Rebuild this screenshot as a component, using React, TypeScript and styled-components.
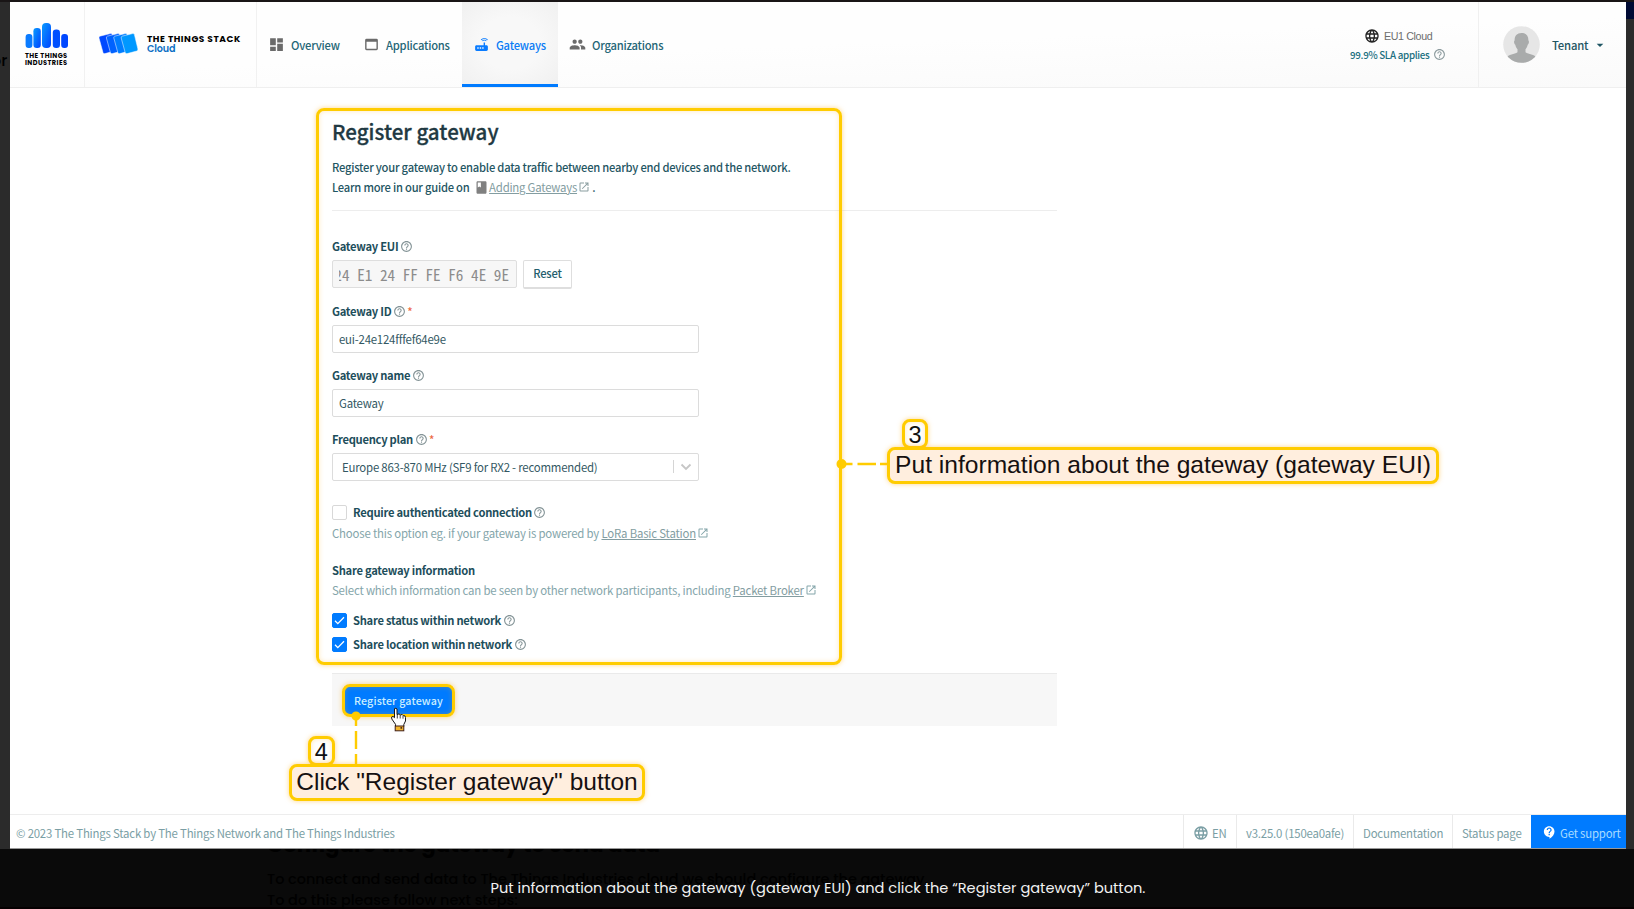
import React from 'react';
import styled, { createGlobalStyle } from 'styled-components';
import {
  MdArrowDropDown,
  MdBook,
  MdContactSupport,
  MdDashboard,
  MdGroup,
  MdHelpOutline,
  MdLanguage,
  MdOpenInNew,
  MdRouter,
  MdWebAsset,
} from 'react-icons/md';

const sans = '"Noto Sans CJK SC", "Noto Sans", sans-serif';
const geometric = 'Poppins, Inter, sans-serif';
const yellow = '#ffcc00';

const GlobalStyle = createGlobalStyle`
  * { box-sizing: border-box; }
  body { margin: 0; background: #2a2a2a; overflow: hidden; }
  svg { display: block; flex: none; }
`;

const Page = styled.div`
  position: relative;
  width: 1634px;
  height: 909px;
  padding-top: 2px;
  overflow: hidden;
  background: linear-gradient(#191516 2px, #2b2b2b 2px);
  display: flex;
  flex-direction: column;
`;

const Backdrop = styled.div`
  position: absolute;
  inset: 0;
  font-family: ${geometric};
  color: #000;
`;

const BackdropText = styled.div<{ $x: number; $y: number; $size: number; $weight?: number }>`
  position: absolute;
  left: ${(p) => p.$x}px;
  top: ${(p) => p.$y}px;
  font-size: ${(p) => p.$size}px;
  font-weight: ${(p) => p.$weight ?? 500};
  line-height: 22px;
  white-space: nowrap;
`;

const BackdropShade = styled.div`
  position: absolute;
  left: 0;
  right: 0;
  top: 849px;
  bottom: 0;
  background: #0a0a0a;
  border-bottom: 2px solid #050001;
`;

const BackdropBar = styled.div`
  position: absolute;
  right: 0;
  top: 2px;
  width: 8px;
  height: 17px;
  background: #000a33;
`;

const Shot = styled.div`
  position: relative;
  width: 1616px;
  height: 847px;
  margin-left: 10px;
  flex: none;
  background: #fff;
  border-bottom: 1px solid #989898;
  display: flex;
  flex-direction: column;
  font-family: ${sans};
  font-size: 11.4px;
  letter-spacing: -0.2px;
  color: #1f5663;
  white-space: nowrap;
`;

const Header = styled.header`
  height: 86px;
  flex: none;
  display: flex;
  border-bottom: 1px solid #efefef;
  background: linear-gradient(178deg, #fefefe 50%, #fafafa);
`;

const Industries = styled.div`
  width: 75px;
  padding: 21px 0 0 15px;
  border-right: 1px solid #f1f1f1;
  font: 700 6.6px/7.2px ${geometric};
  letter-spacing: 0.42px;
  color: #000;
`;

const IndustriesName = styled.div`
  margin-top: 2.5px;
`;

const StackBrand = styled.div`
  width: 172px;
  display: flex;
  padding: 31px 0 0 14px;
  gap: 8px;
  border-right: 1px solid #f1f1f1;
`;

const StackName = styled.div`
  font: 700 9px/10px ${geometric};
  letter-spacing: 0.55px;
  color: #000;
  padding-top: 1px;
`;

const StackEdition = styled.div`
  color: #0a6fc4;
  font-size: 9.6px;
  font-weight: 600;
  letter-spacing: -0.1px;
`;

const Nav = styled.nav`
  display: flex;
  flex: 1;
`;

const Tab = styled.a<{ $width: number; $active?: boolean }>`
  width: ${(p) => p.$width}px;
  height: 85px;
  display: flex;
  align-items: center;
  gap: 6px;
  padding: 0 0 0 11px;
  font-weight: 500;
  font-size: 11.2px;
  letter-spacing: -0.22px;
  color: ${(p) => (p.$active ? '#0a7cf5' : '#256676')};
  ${(p) =>
    p.$active &&
    `padding-top: 3px;
     border-bottom: 3px solid #007bff;
     background: radial-gradient(ellipse at center, #f8f8f8 45%, #f0f0f0);`}
  svg { color: ${(p) => (p.$active ? '#0a7cff' : '#6b6b6b')}; }
`;

const Cluster = styled.div`
  width: 138px;
  padding: 24.5px 0 0 10px;
`;

const ClusterName = styled.div`
  display: flex;
  align-items: center;
  gap: 4px;
  height: 19px;
  padding-left: 14px;
  font: 10.7px "Liberation Sans", sans-serif;
  letter-spacing: -0.38px;
  color: #6d6d6d;
  svg { color: #222; }
`;

const Sla = styled.div`
  display: flex;
  align-items: center;
  gap: 3px;
  height: 18px;
  font-size: 9.8px;
  letter-spacing: -0.31px;
  font-weight: 500;
  color: #206f7f;
  svg { color: #8b9a9d; }
`;

const User = styled.div`
  width: 148px;
  display: flex;
  align-items: center;
  padding-left: 24px;
  border-left: 1px solid #f0f0f0;
  font-weight: 500;
  font-size: 11.3px;
  letter-spacing: -0.18px;
`;

const UserName = styled.span`
  margin: 0 4px 0 12px;
`;

const Main = styled.main`
  width: 725px;
  margin-left: 322px;
  flex: 1;
`;

const Title = styled.h1`
  margin: 28px 0 0;
  font-size: 20.5px;
  letter-spacing: 0.03px;
  line-height: 30px;
  font-weight: 500;
  -webkit-text-stroke: 0.3px;
  color: #213942;
`;

const Intro = styled.div`
  margin-top: 11px;
  padding-bottom: 13px;
  border-bottom: 1px solid #ededed;
  font-weight: 500;
`;

const Line = styled.div<{ $muted?: boolean; $top?: number }>`
  display: flex;
  align-items: center;
  height: 20px;
  margin-top: ${(p) => p.$top ?? 0}px;
  font-size: ${(p) => (p.$muted ? 11.4 : 11.2)}px;
  letter-spacing: ${(p) => (p.$muted ? -0.185 : -0.23)}px;
  color: ${(p) => (p.$muted ? '#84a5aa' : 'inherit')};
  white-space: pre;
`;

const Link = styled.a`
  margin: 1px 1px 0 0;
  color: #839da1;
  font-size: 11.4px;
  font-weight: 400;
  line-height: 15px;
  text-decoration: underline;
  text-underline-offset: 1px;
`;

const Label = styled.div<{ $top?: number }>`
  display: flex;
  align-items: center;
  gap: 1.5px;
  height: 20px;
  margin: ${(p) => p.$top ?? 12}px 0 4px;
  font-size: 11.2px;
  letter-spacing: -0.28px;
  font-weight: 700;
  color: #1d4e5b;
`;

const HelpIcon = styled(MdHelpOutline)`
  width: 13px;
  height: 13px;
  margin-top: 1px;
  color: #839396;
`;

const Required = styled.span`
  color: #ec6a45;
  font-weight: 500;
`;

const Input = styled.div`
  width: 367px;
  height: 28.5px;
  margin-bottom: -0.5px;
  padding: 0 6px;
  display: flex;
  align-items: center;
  border: 1px solid #dcdcdc;
  border-radius: 2px;
  color: #335863;
`;

const SelectInput = styled(Input)`
  padding: 0 6px 0 9px;
  justify-content: space-between;
`;

const Indicator = styled.div`
  display: flex;
  align-items: center;
  height: 13px;
  padding-left: 6px;
  border-left: 1px solid #d5d5d5;
`;

const InputRow = styled.div`
  display: flex;
  height: 28.6px;
  gap: 6px;
`;

const EuiInput = styled.div`
  width: 185px;
  height: 28px;
  padding: 0 7px 0 6px;
  display: flex;
  align-items: center;
  border: 1px solid #dedede;
  border-radius: 2px;
  background: #f7f7f7;
`;

const EuiValue = styled.div`
  flex: 1;
  display: flex;
  justify-content: flex-end;
  overflow: hidden;
  font: 15.2px/24px "Noto Sans Mono CJK SC", "DejaVu Sans Mono", monospace;
  letter-spacing: 0;
  color: #8c8c8c;
`;

const ResetButton = styled.button`
  width: 49px;
  height: 29px;
  margin-top: -0.5px;
  padding: 0;
  border: 1px solid #dedede;
  border-bottom-width: 2px;
  border-radius: 2px;
  background: #fff;
  font: 500 11.2px/25px ${sans};
  letter-spacing: -0.2px;
  color: #245e6d;
`;

const CheckRow = styled.div<{ $top: number }>`
  height: 16px;
  margin-top: ${(p) => p.$top}px;
  display: flex;
  align-items: center;
  gap: 6px;
`;

const Box = styled.div<{ $checked?: boolean }>`
  width: 15px;
  height: 15px;
  display: grid;
  place-items: center;
  border-radius: 2px;
  border: 1px solid ${(p) => (p.$checked ? '#007bff' : '#d8d8d8')};
  background: ${(p) => (p.$checked ? '#007bff' : '#fff')};
`;

const CheckText = styled.div`
  display: flex;
  align-items: center;
  gap: 1.5px;
  padding-bottom: 2px;
  font-size: 11.2px;
  letter-spacing: -0.26px;
  font-weight: 700;
  color: #1d4e5b;
`;

const SectionName = styled.div`
  height: 20px;
  margin-top: 17.5px;
  line-height: 20px;
  font-size: 11.2px;
  letter-spacing: -0.26px;
  font-weight: 700;
  color: #1d4e5b;
`;

const SubmitBar = styled.div`
  height: 53px;
  margin-top: 20px;
  padding: 12px;
  border-top: 1px solid #eaeaea;
  background: #f7f7f7;
`;

const SubmitButton = styled.button`
  width: 109px;
  height: 29px;
  padding: 0;
  border: 0;
  border-radius: 6px;
  background: #007bff;
  color: #c9eeff;
  font: 500 10.7px/29px ${sans};
  letter-spacing: 0.15px;
`;

const Footer = styled.footer`
  height: 34px;
  flex: none;
  display: flex;
  border-top: 1px solid #ededed;
  color: #7a9ea4;
  line-height: 36px;
`;

const Copyright = styled.div`
  flex: 1;
  padding-left: 6px;
`;

const FooterItem = styled.div<{ $width: number }>`
  width: ${(p) => p.$width}px;
  display: flex;
  align-items: center;
  padding: 2px 0 0 9px;
  gap: 3px;
  border-left: 1px solid #eaeaea;
`;

const Support = styled(FooterItem)`
  padding-left: 10px;
  border-color: #007bff;
  background: #007bff;
  color: #a9dcff;
  svg { color: #fff; }
`;

const Highlight = styled.div<{ $x: number; $y: number; $w: number; $h: number }>`
  position: absolute;
  left: ${(p) => p.$x}px;
  top: ${(p) => p.$y}px;
  width: ${(p) => p.$w}px;
  height: ${(p) => p.$h}px;
  border: 3px solid ${yellow};
  border-radius: 8px;
  box-shadow: 0 0 5px rgba(255, 180, 40, 0.55), inset 0 0 5px rgba(255, 180, 40, 0.3);
`;

const Callout = styled(Highlight)<{ $size: number }>`
  display: grid;
  place-items: center;
  background: #ffeede;
  box-shadow: 0 0 5px rgba(255, 180, 40, 0.55);
  font: ${(p) => p.$size}px/30px "Liberation Sans", sans-serif;
  white-space: nowrap;
  color: #161010;
`;

const Step = styled(Highlight)`
  display: grid;
  place-items: center;
  padding-top: 1px;
  background: #fff;
  font: 23.5px/24px "Liberation Sans", sans-serif;
  color: #111;
`;

const Connectors = styled.svg`
  position: absolute;
  left: 0;
  top: 0;
`;

const Caption = styled.div`
  position: relative;
  flex: 1;
  display: flex;
  justify-content: center;
  padding: 28px 0 0 2px;
  font: 400 14.58px/22px ${geometric};
  color: #f2f2f2;
`;

const IndustriesMark = () => (
  <svg width="44" height="26" viewBox="0 0 44 26">
    <defs>
      <linearGradient id="bars" x1="0" y1="0" x2="1" y2="1">
        <stop offset="0" stopColor="#0a9bff" />
        <stop offset="1" stopColor="#0043ff" />
      </linearGradient>
    </defs>
    <rect x="0.6" y="11" width="6.8" height="14" rx="3" fill="#0a7bff" />
    <rect x="8.4" y="5" width="7.4" height="20" rx="3.3" fill="url(#bars)" />
    <rect x="17" y="0" width="9" height="25" rx="4" fill="url(#bars)" />
    <rect x="27.8" y="6.5" width="7.2" height="18.5" rx="3.3" fill="#0050ff" />
    <rect x="36.2" y="11" width="6.8" height="14" rx="3" fill="#0047ff" />
  </svg>
);

const StackMark = () => (
  <svg width="40" height="22" viewBox="0 0 40 22">
    {['#0048ff', '#0062ff', '#007dff', '#0098ff'].map((fill, i) => (
      <path
        key={fill}
        d="M0.8 3.200 L11.500 .6 Q12.800 .4 13.200 1.600 L16.700 16 Q17 17.500 15.600 18 L6 20.600 Q4.400 21 4 19.600 L0 5 Q-.2 3.600 .8 3.200Z"
        transform={`translate(${i * 7.4} 0)`}
        fill={fill}
        stroke="#fff"
        strokeWidth="0.5"
      />
    ))}
  </svg>
);

const Avatar = () => (
  <svg width="37" height="37" viewBox="0 0 37 37">
    <defs>
      <clipPath id="avatar">
        <circle cx="18.5" cy="18.5" r="18.3" />
      </clipPath>
    </defs>
    <g clipPath="url(#avatar)">
      <rect width="37" height="37" fill="#e6e6e6" />
      <path
        d="M18.5 7c4.7 0 7 3 6.900 7.500 1 .8.5 3.500-.7 4.200-.4 2.300-1.400 3.500-2.200 4.600v3c3 2.200 9 2 11.500 5.700v6h-31v-6c2.500-3.700 8.500-3.500 11.500-5.700v-3c-.8-1.100-1.800-2.300-2.200-4.600-1.200-.7-1.700-3.400-.7-4.200C11.500 10 13.800 7 18.500 7z"
        fill="#a9abab"
      />
    </g>
  </svg>
);

const Check = () => (
  <svg width="11" height="9" viewBox="0 0 11 9" fill="none" stroke="#fff" strokeWidth="1.3">
    <path d="M1 4.800l2.800 2.800L10 1.200" />
  </svg>
);

const HandPointer = () => (
  <g transform="translate(391 707.500)">
    <path
      d="M3.500 1.200Q5 .2 6 1.500V7l2-.6 1.500 1 1.700-.4 1 1.200 1.800.2.500 1.600v3.500L12.800 17v2H4.500v-2.200L.800 11.500.600 9.500l1.400-.6 1.500 1.300z"
      fill="#fff"
      stroke="#171717"
      strokeWidth="1"
    />
    <path d="M6.300 7v4M9.200 7.500V11M12 8.500V11.200" stroke="#171717" strokeWidth="0.8" fill="none" />
    <rect x="4.200" y="18.500" width="8.600" height="4.800" fill="#f2b52c" stroke="#40201b" />
    <rect x="9.500" y="19.600" width="1.600" height="1.600" fill="#40201b" />
  </g>
);

const Help = ({ label, required }: { label: string; required?: boolean }) => (
  <>
    <span>{label}</span>
    <HelpIcon />
    {required && <Required>*</Required>}
  </>
);

export default function App() {
  return (
    <Page>
      <GlobalStyle />
      <Backdrop>
        <BackdropShade />
        <BackdropBar />
        <BackdropText $x={-9} $y={50} $size={16}>or</BackdropText>
        <BackdropText $x={267} $y={834} $size={21.3} $weight={700}>Configure the gateway to send data</BackdropText>
        <BackdropText $x={267} $y={868} $size={14.45}>
          To connect and send data to The Things Industries cloud we should configure the gateway.
        </BackdropText>
        <BackdropText $x={267} $y={889} $size={14.45}>To do this please follow next steps:</BackdropText>
      </Backdrop>

      <Shot>
        <Header>
          <Industries>
            <IndustriesMark />
            <IndustriesName>
              THE THINGS
              <br />
              INDUSTRIES
            </IndustriesName>
          </Industries>
          <StackBrand>
            <StackMark />
            <StackName>
              THE THINGS STACK
              <StackEdition>Cloud</StackEdition>
            </StackName>
          </StackBrand>
          <Nav>
            <Tab $width={95}><MdDashboard size={17} />Overview</Tab>
            <Tab $width={110}><MdWebAsset size={17} />Applications</Tab>
            <Tab $width={96} $active><MdRouter size={17} />Gateways</Tab>
            <Tab $width={120}><MdGroup size={17} />Organizations</Tab>
          </Nav>
          <Cluster>
            <ClusterName><MdLanguage size={16} />EU1 Cloud</ClusterName>
            <Sla>99.9% SLA applies<MdHelpOutline size={13} /></Sla>
          </Cluster>
          <User>
            <Avatar />
            <UserName>Tenant</UserName>
            <MdArrowDropDown size={16} />
          </User>
        </Header>

        <Main>
          <Title>Register gateway</Title>
          <Intro>
            <Line>Register your gateway to enable data traffic between nearby end devices and the network.</Line>
            <Line>
              {'Learn more in our guide on  '}
              <MdBook size={15} color="#808080" />
              <Link>Adding Gateways</Link>
              <MdOpenInNew size={12} color="#8a9da0" />
              {' .'}
            </Line>
          </Intro>

          <Label $top={25}><Help label="Gateway EUI" /></Label>
          <InputRow>
            <EuiInput><EuiValue>24 E1 24 FF FE F6 4E 9E</EuiValue></EuiInput>
            <ResetButton>Reset</ResetButton>
          </InputRow>

          <Label><Help label="Gateway ID" required /></Label>
          <Input>eui-24e124fffef64e9e</Input>

          <Label><Help label="Gateway name" /></Label>
          <Input>Gateway</Input>

          <Label><Help label="Frequency plan" required /></Label>
          <SelectInput>
            Europe 863-870 MHz (SF9 for RX2 - recommended)
            <Indicator>
              <svg width="12" height="8" viewBox="0 0 12 8" fill="none" stroke="#c6c6c6" strokeWidth="1.800">
                <path d="M1.500 1.500L6 6l4.500-4.500" />
              </svg>
            </Indicator>
          </SelectInput>

          <CheckRow $top={24}>
            <Box />
            <CheckText><Help label="Require authenticated connection" /></CheckText>
          </CheckRow>
          <Line $muted $top={2}>
            {'Choose this option eg. if your gateway is powered by '}
            <Link>LoRa Basic Station</Link>
            <MdOpenInNew size={12} />
          </Line>

          <SectionName>Share gateway information</SectionName>
          <Line $muted>
            {'Select which information can be seen by other network participants, including '}
            <Link>Packet Broker</Link>
            <MdOpenInNew size={12} />
          </Line>
          <CheckRow $top={12.5}>
            <Box $checked><Check /></Box>
            <CheckText><Help label="Share status within network" /></CheckText>
          </CheckRow>
          <CheckRow $top={8}>
            <Box $checked><Check /></Box>
            <CheckText><Help label="Share location within network" /></CheckText>
          </CheckRow>

          <SubmitBar>
            <SubmitButton>Register gateway</SubmitButton>
          </SubmitBar>
        </Main>

        <Footer>
          <Copyright>© 2023 The Things Stack by The Things Network and The Things Industries</Copyright>
          <FooterItem $width={53}><MdLanguage size={16} />EN</FooterItem>
          <FooterItem $width={117}>v3.25.0 (150ea0afe)</FooterItem>
          <FooterItem $width={99}>Documentation</FooterItem>
          <FooterItem $width={79}>Status page</FooterItem>
          <Support $width={95}><MdContactSupport size={15} />Get support</Support>
        </Footer>
      </Shot>

      <Highlight $x={316} $y={108} $w={526} $h={557} />
      <Highlight $x={342} $y={684} $w={112.5} $h={33} />
      <Connectors width="1634" height="909" viewBox="0 0 1634 909">
        <g fill={yellow} stroke={yellow} strokeWidth="2.400">
          <circle cx="841.500" cy="464" r="3.800" />
          <circle cx="356" cy="716" r="3.400" />
          <path d="M841 464h11.500M857.500 464h18.500M880 464h9M356 716v10M356 731v18M356 754v11" />
        </g>
        <HandPointer />
      </Connectors>
      <Step $x={902} $y={418.500} $w={26} $h={30}>3</Step>
      <Callout $x={887} $y={446.500} $w={552} $h={37} $size={24.6}>
        Put information about the gateway (gateway EUI)
      </Callout>
      <Step $x={308} $y={735.500} $w={26.500} $h={30}>4</Step>
      <Callout $x={289} $y={763.500} $w={356} $h={37} $size={24.5}>
        Click "Register gateway" button
      </Callout>

      <Caption>Put information about the gateway (gateway EUI) and click the “Register gateway” button.</Caption>
    </Page>
  );
}
